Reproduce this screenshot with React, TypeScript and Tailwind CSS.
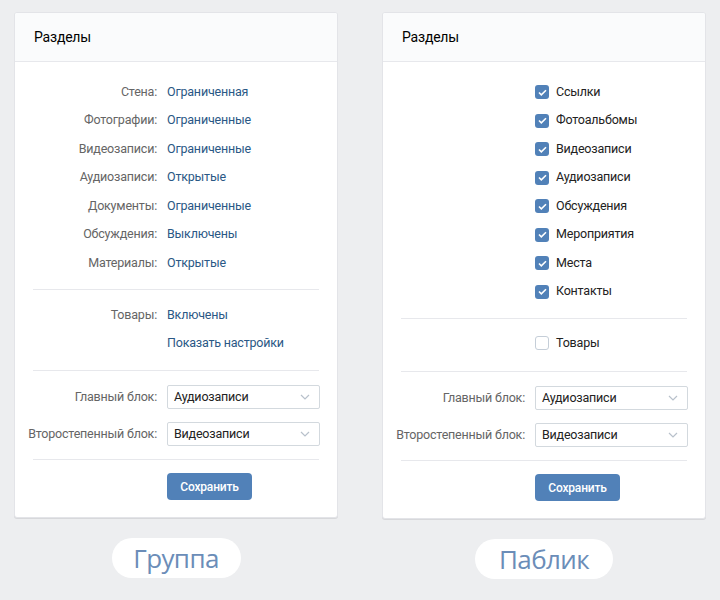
import React from 'react'

const font = { fontFamily: 'Roboto, "Open Sans", "Liberation Sans", sans-serif' }

/* small helpers */

const Divider = ({ className = '' }: { className?: string }) => (
  <div className={`h-px bg-[#e7e8ec] ${className}`} />
)

const Chevron = () => (
  <svg width="10" height="6" viewBox="0 0 10 6" fill="none">
    <path d="M1 1l4 4 4-4" stroke="#b8c1cb" strokeWidth="1.2" />
  </svg>
)

const Select = ({ value }: { value: string }) => (
  <div className="flex h-[24px] w-[153px] items-center justify-between rounded-[2px] border border-[#d3d9de] bg-white pl-[6px] pr-[9px] text-[12.5px] text-[#222]">
    <span>{value}</span>
    <Chevron />
  </div>
)

const Row = ({ label, children }: { label: string; children: React.ReactNode }) => (
  <div className="flex h-[28.5px] items-center">
    <div className="flex w-[124px] shrink-0 justify-end whitespace-nowrap text-[12.5px] text-[#656565]">
      {label}
    </div>
    <div className="ml-[10px] flex items-center whitespace-nowrap text-[12.5px]">{children}</div>
  </div>
)

const Check = ({ label, checked }: { label: string; checked?: boolean }) => (
  <div className="flex h-[28.5px] items-center pl-[134px]">
    {checked ? (
      <div className="flex h-[14px] w-[14px] items-center justify-center rounded-[3px] bg-[#5181b8]">
        <svg width="9" height="7" viewBox="0 0 9 7" fill="none">
          <path d="M1 3.5l2.3 2.3L8 1.2" stroke="white" strokeWidth="1.6" />
        </svg>
      </div>
    ) : (
      <div className="h-[14px] w-[14px] rounded-[3px] border border-[#c5ced8] bg-white" />
    )}
    <span className="ml-[7px] text-[12.5px] text-[#222]">{label}</span>
  </div>
)

const SelectRow = ({ label, value }: { label: string; value: string }) => (
  <div className="flex h-[24px] items-center">
    <div className="flex w-[124px] shrink-0 justify-end whitespace-nowrap text-[12.5px] text-[#656565]">
      {label}
    </div>
    <div className="ml-[10px]">
      <Select value={value} />
    </div>
  </div>
)

const Bottom = () => (
  <>
    <div className="mt-[14px] flex flex-col gap-[13px]">
      <SelectRow label="Главный блок:" value="Аудиозаписи" />
      <SelectRow label="Второстепенный блок:" value="Видеозаписи" />
    </div>
    <Divider className="mt-[13px]" />
    <div className="mt-[13px] pb-[17px] pl-[134px]">
      <button className="h-[27px] w-[85px] rounded-[4px] bg-[#5181b8] text-[12px] font-medium text-white">
        Сохранить
      </button>
    </div>
  </>
)

const Card = ({ children }: { children: React.ReactNode }) => (
  <div className="w-[324px] overflow-hidden rounded-[3px] border border-[#e3e4e8] bg-white shadow-[0_1px_0_0_#d7d8db]">
    <div className="flex h-[49px] items-center border-b border-[#e7e8ec] bg-[#fafbfc] pl-[19px] text-[14px] text-black">
      Разделы
    </div>
    <div className="px-[18px]">{children}</div>
  </div>
)

const Pill = ({ text, w }: { text: string; w: string }) => (
  <div
    className={`mt-[20px] flex h-[40px] ${w} items-center justify-center rounded-full bg-white text-[26px] tracking-[-0.6px] text-[#6b8db8]`}
    style={{ fontFamily: '"Open Sans", "Noto Sans", sans-serif' }}
  >
    {text}
  </div>
)

const group = [
  ['Стена:', 'Ограниченная'],
  ['Фотографии:', 'Ограниченные'],
  ['Видеозаписи:', 'Ограниченные'],
  ['Аудиозаписи:', 'Открытые'],
  ['Документы:', 'Ограниченные'],
  ['Обсуждения:', 'Выключены'],
  ['Материалы:', 'Открытые'],
]

const publicChecks = [
  'Ссылки',
  'Фотоальбомы',
  'Видеозаписи',
  'Аудиозаписи',
  'Обсуждения',
  'Мероприятия',
  'Места',
  'Контакты',
]

export default function App() {
  return (
    <div className="h-[600px] w-[720px] bg-[#edeef0] tracking-[-0.2px]" style={font}>
      <div className="flex gap-[44px] pl-[14px] pt-[12px]">
        {/* GROUP */}
        <div className="flex flex-col items-center">
          <Card>
            <div className="pt-[16px]">
              {group.map(([l, v]) => (
                <Row key={l} label={l}>
                  <span className="text-[#2a5885]">{v}</span>
                </Row>
              ))}
            </div>
            <Divider className="mt-[11px]" />
            <div className="mt-[11.5px]">
              <Row label="Товары:">
                <span className="text-[#2a5885]">Включены</span>
              </Row>
              <Row label="">
                <span className="text-[#2a5885]">Показать настройки</span>
              </Row>
            </div>
            <Divider className="mt-[12px]" />
            <Bottom />
          </Card>
          <Pill text="Группа" w="w-[129px]" />
        </div>

        {/* PUBLIC */}
        <div className="flex flex-col items-center">
          <Card>
            <div className="pt-[16px]">
              {publicChecks.map((c) => (
                <Check key={c} label={c} checked />
              ))}
            </div>
            <Divider className="mt-[12px]" />
            <div className="mt-[10px]">
              <Check label="Товары" />
            </div>
            <Divider className="mt-[13.5px]" />
            <Bottom />
          </Card>
          <Pill text="Паблик" w="w-[138px]" />
        </div>
      </div>
    </div>
  )
}
